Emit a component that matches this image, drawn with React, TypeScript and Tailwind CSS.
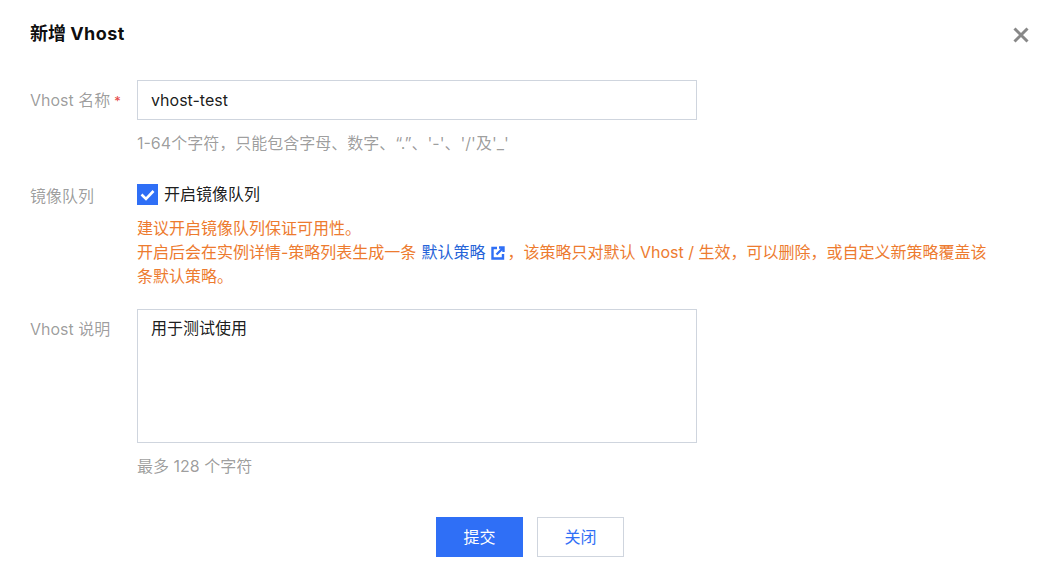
import React from "react";

const font = { fontFamily: '"Inter", "Noto Sans CJK SC", sans-serif' };

function Row({ label, required, children }: { label: string; required?: boolean; children: React.ReactNode }) {
  return (
    <div className="flex">
      <div className="w-[107px] shrink-0 text-[16px] leading-[22px] text-[#00000066] pt-[9px] flex items-start">
        <span>{label}</span>
        {required && <span className="text-[#e54545] text-[13px] leading-[24px] ml-[4px]">*</span>}
      </div>
      <div className="flex-1 min-w-0">{children}</div>
    </div>
  );
}

export default function App() {
  return (
    <div className="w-[1046px] h-[570px] bg-white relative overflow-hidden pl-[30px] pr-[49px] pt-[22px]" style={font}>
      <div className="text-[18px] leading-[24px] font-bold text-[#000000f0]">
        新增 <span className="tracking-[0.4px]">Vhost</span>
      </div>
      <button className="absolute left-[1011px] top-[25px] w-[20px] h-[20px] text-[#888888]" aria-label="关闭">
        <svg viewBox="0 0 20 20" width="20" height="20" fill="none" stroke="currentColor" strokeWidth="3">
          <path d="M3.5 3.5L16.5 16.5M16.5 3.5L3.5 16.5" />
        </svg>
      </button>

      <div className="mt-[34px]">
        <Row label="Vhost 名称" required>
          <div className="w-[560px] h-[40px] border border-[#cfd5de] flex items-center px-[13px] text-[16px] text-[#000000e6]">
            vhost-test
          </div>
          <div className="mt-[12px] text-[16px] leading-[22px] text-[#00000066]">
            1-64个字符，只能包含字母、数字、“.”、'-'、'/'及'_'
          </div>
        </Row>
      </div>

      <div className="mt-[22px]">
        <Row label="镜像队列">
          <div className="flex items-start h-[22px] mt-[8px] text-[16px] leading-[21px] text-[#000000e6]">
            <span className="w-[21px] h-[21px] bg-[#2f6ff6] flex items-center justify-center mr-[6px]">
              <svg viewBox="0 0 21 21" width="21" height="21" fill="none" stroke="white" strokeWidth="2.6">
                <path d="M4.5 10.5L9 15L16.5 7" />
              </svg>
            </span>
            <span>开启镜像队列</span>
          </div>
          <div className="mt-[10px] w-[860px] text-[16px] leading-[24px] text-[#ed7b2f]">
            <div>建议开启镜像队列保证可用性。</div>
            <div>
              <span>开启后会在实例详情-策略列表生成一条</span>
              <a className="text-[#2563d8] ml-[5px]">
                默认策略
                <svg className="inline-block ml-[6px] mr-[2px] align-[-2px]" viewBox="0 0 14 14" width="14" height="14" fill="none" stroke="#2f6ff6" strokeWidth="2.4">
                  <path d="M12 8V12.5H1.5V2H6" />
                  <path d="M5.5 8.5L12 2M8 1.5H12.5V6" />
                </svg>
              </a>
              <span>，该策略只对默认 Vhost / 生效，可以删除，或自定义新策略覆盖该条默认策略。</span>
            </div>
          </div>
        </Row>
      </div>

      <div className="mt-[21px]">
        <Row label="Vhost 说明">
          <div className="w-[560px] h-[134px] border border-[#cfd5de] px-[13px] pt-[7px] text-[16px] leading-[22px] text-[#000000e6]">
            用于测试使用
          </div>
          <div className="mt-[12px] text-[16px] leading-[22px] text-[#00000066]">最多 128 个字符</div>
        </Row>
      </div>

      <div className="absolute left-0 right-0 top-[517px] flex justify-center gap-[14px] pl-[14px]">
        <button className="w-[87px] h-[40px] bg-[#2f6ff6] text-white text-[16px]">提交</button>
        <button className="w-[87px] h-[40px] bg-white border border-[#cfd5de] text-[#2f6ff6] text-[16px]">关闭</button>
      </div>
    </div>
  );
}
